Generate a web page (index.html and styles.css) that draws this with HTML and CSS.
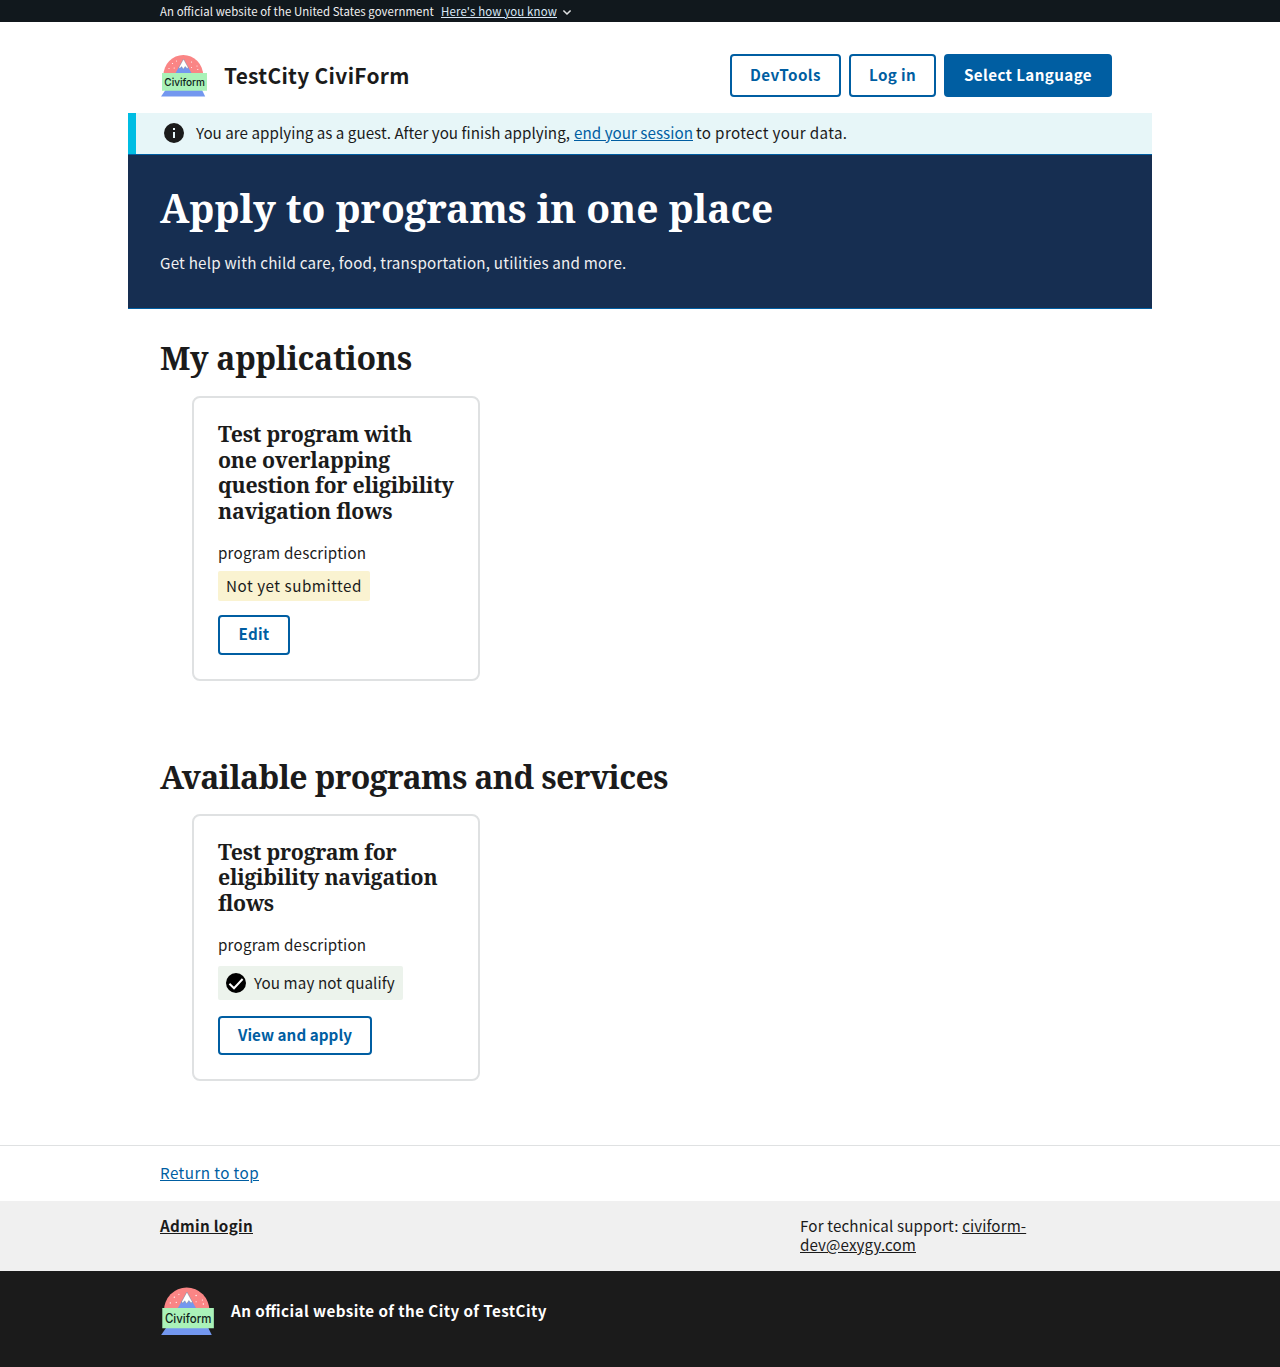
FILE: index.html
```html
<!DOCTYPE html>
<html lang="en">
<head>
<meta charset="utf-8">
<title>TestCity CiviForm</title>
<link rel="stylesheet" href="styles.css">
</head>
<body>
<svg class="symbols" aria-hidden="true">
  <symbol id="logo" viewBox="0 0 48 48">
    <path d="M3.4 23.5a19.9 20.5 0 0 1 39.8 0z" fill="#fa8585"/>
    <path d="M15 22 23.5 7l8.5 15z" fill="#7397ef"/>
    <path d="M23.5 7 19 15.2l.6 1.6 2-2.2 1.7 2.6 1.9-2.8 2.1 2.3.8-1.4z" fill="#fff" stroke="#777" stroke-width=".35"/>
    <g fill="#fff"><circle cx="12.5" cy="11.5" r=".6"/><circle cx="16.5" cy="9" r=".5"/><circle cx="9" cy="16.5" r=".6"/><circle cx="14.2" cy="16" r=".6"/><circle cx="31.5" cy="10" r=".6"/><circle cx="37" cy="14" r=".5"/><circle cx="31.5" cy="15.5" r=".5"/><circle cx="37.8" cy="17.5" r=".6"/></g>
    <path d="M5.5 38h36.5l3.2 6.6H1z" fill="#7397ef"/>
    <path d="M2 21h45v17.7H2z" fill="#aaf2b8"/>
    <text x="4.3" y="34.2" font-family="Inter, sans-serif" font-size="11" font-weight="500" textLength="40.6" lengthAdjust="spacingAndGlyphs" fill="#10241a">Civiform</text>
  </symbol>
</svg>

<div class="gov-banner">
  <div class="wrap gov-row">
    <span class="gov-text">An official website of the United States government</span>
    <a class="gov-link">Here's how you know</a>
    <svg class="chevron" viewBox="0 0 10 7"><path d="M1.4 1.5 5 5l3.6-3.5" fill="none" stroke="#dfe1e2" stroke-width="1.6"/></svg>
  </div>
</div>

<header class="wrap header">
  <svg class="logo"><use href="#logo"/></svg>
  <span class="site-title">TestCity CiviForm</span>
  <nav class="nav">
    <button class="btn dev">DevTools</button>
    <button class="btn login">Log in</button>
    <button class="btn solid">Select Language</button>
  </nav>
</header>

<main>
  <div class="alert">
    <svg class="info" viewBox="0 0 24 24"><path d="M12 2a10 10 0 1 0 0 20 10 10 0 0 0 0-20zm1 15h-2v-6h2zm0-8h-2V7h2z" fill="#1b1b1b"/></svg>
    <p class="alert-text"><span class="guest">You are applying as a guest. After you finish applying,</span><a class="link session">end your session</a><span class="protect">to protect your data.</span></p>
  </div>
  <section class="hero">
    <h1>Apply to programs in one place</h1>
    <p>Get help with child care, food, transportation, utilities and more.</p>
  </section>

  <section class="wrap programs">
    <h2 class="mine">My applications</h2>
    <article class="card">
      <h3>Test program with<br>one overlapping<br>question for eligibility<br>navigation flows</h3>
      <p class="description">program description</p>
      <span class="tag pending">Not yet submitted</span>
      <button class="btn edit">Edit</button>
    </article>
  </section>

  <section class="wrap programs available">
    <h2>Available programs and services</h2>
    <article class="card">
      <h3>Test program for<br>eligibility navigation<br>flows</h3>
      <p class="description">program description</p>
      <span class="tag qualify"><svg viewBox="0 0 24 24"><circle cx="12" cy="12" r="10"/><path d="m5.4 12.7 4.6 4.5 8.6-9.2" fill="none" stroke="#fff" stroke-width="2"/></svg><span class="qualify-text">You may not qualify</span></span>
      <button class="btn view">View and apply</button>
    </article>
  </section>
</main>

<footer>
  <div class="return"><div class="wrap"><a class="link return-link">Return to top</a></div></div>
  <div class="contact">
    <div class="wrap contact-row">
      <a class="admin">Admin login</a>
      <p class="support">For technical support: <a class="mail">civiform-<br>dev@exygy.com</a></p>
    </div>
  </div>
  <div class="identity">
    <div class="wrap identity-row">
      <svg class="footer-logo"><use href="#logo"/></svg>
      <span class="identity-text">An official website of the City of TestCity</span>
    </div>
  </div>
</footer>
</body>
</html>
```

FILE: styles.css
```css
* { box-sizing: border-box; }
body {
  margin: 0;
  background: #fff;
  color: #1b1b1b;
  font-family: "Noto Sans CJK JP", "Noto Sans", sans-serif;
  font-size: 15.2px;
  line-height: 24px;
  font-feature-settings: "liga" 1;
}
h1, h2, h3, p { margin: 0; }
h1, h2, h3 { font-family: "Noto Serif", "DejaVu Serif Condensed", "DejaVu Serif", serif; font-weight: 700; white-space: nowrap; }
a { text-decoration: underline; }
.symbols { display: none; }
.wrap { width: 1024px; margin: 0 auto; padding: 0 32px; }
.link { color: #005ea2; }

.gov-banner { height: 22px; background: #11181d; color: #f0f0f0; font-size: 11.4px; line-height: 22px; }
.gov-row { display: flex; align-items: center; white-space: nowrap; }
.gov-text { width: 274px; margin-right: 7px; letter-spacing: 0.074px; }
.gov-link { color: #d9e8f6; letter-spacing: 0.16px; }
.chevron { width: 10px; height: 7px; margin: 3px 0 0 5px; }

.header { display: flex; align-items: center; height: 91px; padding-top: 16px; }
.logo { width: 48px; height: 48px; margin-top: 1px; }
.site-title { margin-left: 16px; padding-bottom: 2px; font-size: 20.9px; font-weight: 700; letter-spacing: 0.32px; }
.nav { display: flex; gap: 8px; margin: 0 8px 0 auto; }
.btn {
  display: block;
  height: 43px;
  padding: 0 0 3px;
  border: 2px solid #005ea2;
  border-radius: 4px;
  background: #fff;
  color: #005ea2;
  font: 700 15.2px/24px "Noto Sans CJK JP", "Noto Sans", sans-serif;
  white-space: nowrap;
}
.dev { width: 111px; letter-spacing: 0.43px; }
.login { width: 87px; letter-spacing: 0.344px; }
.solid { width: 168px; background: #005ea2; color: #fff; letter-spacing: 0.374px; }

.alert { display: flex; align-items: center; width: 1024px; height: 41px; margin: 0 auto; padding: 0 0 1px 26px; border-left: 8px solid #00bde3; background: #e7f6f8; }
.info { width: 24px; height: 24px; }
.alert-text { display: flex; margin-left: 10px; padding-bottom: 3px; white-space: nowrap; }
.guest { width: 378px; letter-spacing: 0.023px; }
.session { width: 119px; margin-right: 3px; letter-spacing: 0.034px; }
.protect { letter-spacing: 0.34px; }

.hero { width: 1024px; height: 155px; margin: 0 auto; padding: 27px 32px 0; border: solid #005ea2; border-width: 1px 0; background: #162e51; color: #fff; }
.hero h1 { font-size: 39px; line-height: 52px; letter-spacing: -0.06px; }
.hero p { margin-top: 16px; color: #f0f0f0; letter-spacing: 0.205px; }

.programs { padding-top: 28px; }
.available { padding-top: 75px; }
h2 { height: 42px; font-size: 32px; line-height: 42px; letter-spacing: -0.65px; }
.mine { letter-spacing: -0.34px; }
.card { display: flex; flex-direction: column; align-items: flex-start; width: 288px; margin: 17px 0 0 32px; padding: 23px 24px 24px; border: 2px solid #dfe1e2; border-radius: 8px; }
.available .card { margin-top: 16px; }
h3 { font-size: 21.3px; line-height: 25.6px; letter-spacing: -0.25px; }
.description { margin-top: 16.5px; letter-spacing: 0.19px; }
.tag { display: flex; align-items: center; padding: 0 8px; border-radius: 2px; white-space: nowrap; }
.pending { width: 152px; height: 30px; margin-top: 7px; padding-bottom: 2px; background: #faf3d1; letter-spacing: 0.534px; }
.qualify { width: 185px; height: 34px; margin-top: 10px; background: #ecf3ec; letter-spacing: 0.1px; }
.qualify svg { flex: none; width: 24px; height: 24px; margin: 0 6px 0 -2px; }
.qualify-text { padding-bottom: 3px; }
.edit { width: 72px; height: 40px; margin-top: 14px; letter-spacing: 0.262px; }
.view { width: 154px; height: 39px; margin-top: 16px; letter-spacing: 0.048px; }

footer { margin-top: 64px; }
.return { height: 56px; padding-top: 14px; border-top: 1px solid #dfe1e2; }
.return-link { letter-spacing: 0.427px; }
.contact { height: 70px; padding-top: 15px; background: #f0f0f0; line-height: 19px; }
.contact-row { display: flex; }
.admin { width: 640px; font-weight: 700; letter-spacing: 0.303px; }
.support { letter-spacing: 0.15px; white-space: nowrap; }
.mail { letter-spacing: 0.093px; }
.identity { height: 96px; padding-top: 13px; background: #1b1b1b; color: #fff; }
.identity-row { display: flex; align-items: center; }
.footer-logo { width: 55px; height: 55px; }
.identity-text { margin-left: 16px; padding-bottom: 4px; font-weight: 700; letter-spacing: 0.42px; }
```
